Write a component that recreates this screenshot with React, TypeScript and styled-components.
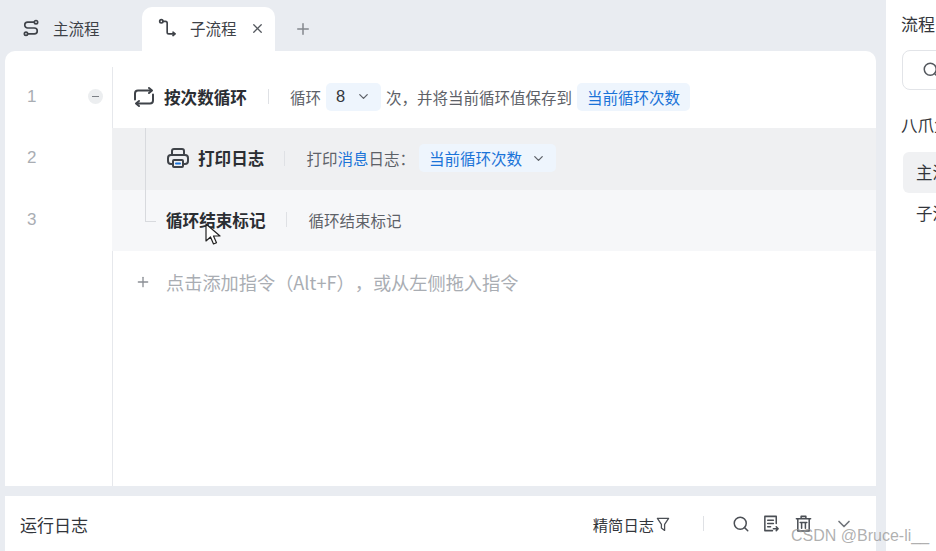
import styled, { createGlobalStyle } from "styled-components";
import { ChevronDown, Plus, Search, X } from "lucide-react";

const GlobalStyle = createGlobalStyle`
  html, body {
    margin: 0;
    padding: 0;
    width: 936px;
    height: 551px;
    overflow: hidden;
  }
  body {
    background: #e9ecf1;
    font-family: "Noto Sans CJK SC", "Noto Sans", sans-serif;
    color: #33363b;
    text-spacing-trim: space-all;
  }
`;

const Page = styled.div`
  position: relative;
  display: flex;
  width: 936px;
  height: 551px;
  overflow: hidden;
`;

const Main = styled.div`
  width: 871px;
  flex: none;
  margin-left: 5px;
  display: flex;
  flex-direction: column;
`;

const TabBar = styled.div`
  height: 51px;
  flex: none;
  display: flex;
  align-items: flex-end;
`;

const Tab = styled.div<{ $active?: boolean }>`
  height: 44px;
  box-sizing: border-box;
  display: flex;
  align-items: center;
  font-size: 15.5px;
  color: #3d4147;
  padding: 0 0 2px 16px;
  width: ${(p) => (p.$active ? 133 : 137)}px;
  background: ${(p) => (p.$active ? "#fff" : "transparent")};
  border-radius: 10px 10px 0 0;
  gap: 12px;
`;

const TabClose = styled(X)`
  width: 15px;
  height: 15px;
  margin-left: 1px;
  color: #54585e;
`;

const AddTab = styled(Plus)`
  width: 18px;
  height: 18px;
  margin: 0 0 13px 19px;
  color: #83878d;
`;

const Editor = styled.div`
  flex: 1;
  min-height: 0;
  background: #fff;
  border-radius: 10px 10px 0 0;
  padding-top: 16px;
  display: flex;
`;

const Gutter = styled.div`
  width: 108px;
  flex: none;
  box-sizing: border-box;
  border-right: 1px solid #e6e8ec;
`;

const LineNo = styled.div<{ $h: number }>`
  height: ${(p) => p.$h}px;
  display: flex;
  align-items: center;
  justify-content: space-between;
  padding: 0 9px 2px 22px;
  box-sizing: border-box;
  font-size: 17px;
  color: #a9adb3;
  font-family: "Liberation Sans", sans-serif;
`;

const Collapse = styled.span`
  width: 15px;
  height: 15px;
  border-radius: 50%;
  background: #eceef0;
  display: flex;
  align-items: center;
  justify-content: center;
  &::before {
    content: "";
    width: 7px;
    height: 1.5px;
    background: #7b7f85;
  }
`;

const Rows = styled.div`
  flex: 1;
  min-width: 0;
  margin-left: -1px;
`;

const Row = styled.div<{ $h: number; $bg?: string; $indent?: number }>`
  position: relative;
  height: ${(p) => p.$h}px;
  box-sizing: border-box;
  background: ${(p) => p.$bg || "transparent"};
  padding: 0 0 2px ${(p) => p.$indent || 0}px;
  display: flex;
  align-items: center;
  font-size: 15.5px;
  color: #5d6168;
`;

const TreeLine = styled.span<{ $end?: boolean }>`
  position: absolute;
  left: 33px;
  top: 0;
  width: ${(p) => (p.$end ? 10 : 0)}px;
  height: ${(p) => (p.$end ? 31 : 62)}px;
  border-left: 1px solid #d8dade;
  border-bottom: ${(p) => (p.$end ? "1px solid #d8dade" : "none")};
`;

const Icon = styled.svg<{ $size?: number }>`
  width: ${(p) => p.$size || 24}px;
  height: ${(p) => p.$size || 24}px;
  flex: none;
  fill: none;
  stroke: #3f4349;
  stroke-width: 2;
  stroke-linecap: round;
  stroke-linejoin: round;
`;

const Title = styled.span<{ $ml?: number }>`
  font-size: 16.6px;
  font-weight: 700;
  color: #2b2e33;
  margin-left: ${(p) => p.$ml ?? 7}px;
`;

const Divider = styled.span<{ $left: number; $right: number }>`
  width: 1px;
  height: 15px;
  background: #dfe1e5;
  margin: 0 ${(p) => p.$right}px 0 ${(p) => p.$left}px;
`;

const Chip = styled.span<{ $ml?: number; $gap?: number }>`
  height: 28px;
  box-sizing: border-box;
  padding: 0 10px;
  margin-left: ${(p) => p.$ml || 0}px;
  gap: ${(p) => p.$gap || 0}px;
  background: #eef5fd;
  border-radius: 5px;
  display: inline-flex;
  align-items: center;
  color: #1a73d8;
  font-size: 15.5px;
  white-space: nowrap;
`;

const NumberChip = styled(Chip)`
  color: #33363b;
  margin: 0 5px;
  width: 55px;
  justify-content: space-between;
  font-size: 16.5px;
  font-family: "Liberation Sans", sans-serif;
`;

const ChipArrow = styled(ChevronDown)`
  width: 15px;
  height: 15px;
  color: #5d6168;
`;

const Link = styled.span`
  color: #1a73d8;
`;

const AddRow = styled.div`
  height: 64px;
  box-sizing: border-box;
  padding: 0 0 2px 23px;
  display: flex;
  align-items: center;
  gap: 15px;
  color: #a9adb3;
  font-size: 18.2px;
`;

const AddIcon = styled(Plus)`
  width: 16px;
  height: 16px;
  color: #8b8f95;
`;

const LogBar = styled.div`
  height: 55px;
  flex: none;
  margin-top: 10px;
  background: #fff;
  display: flex;
  align-items: center;
  padding-left: 15px;
  font-size: 17px;
  color: #33363b;
`;

const LogTitle = styled.span`
  flex: 1;
  padding-top: 1px;
`;

const LogTools = styled.div`
  display: flex;
  align-items: center;
  padding-right: 22px;
  font-size: 15.3px;
`;

const ToolIcon = styled.svg<{ $ml?: number; $size?: number }>`
  width: ${(p) => p.$size || 19}px;
  height: ${(p) => p.$size || 19}px;
  flex: none;
  margin-left: ${(p) => p.$ml || 0}px;
  fill: none;
  stroke: #4b4f55;
  stroke-width: 1.6;
  stroke-linecap: round;
  stroke-linejoin: round;
`;

const LogSearch = styled(Search)`
  width: 18px;
  height: 18px;
  color: #4b4f55;
`;

const LogChevron = styled(ChevronDown)`
  width: 20px;
  height: 20px;
  margin-left: 21px;
  color: #71757b;
`;

const Side = styled.aside`
  width: 50px;
  box-sizing: border-box;
  margin-left: 10px;
  flex: none;
  background: #fff;
  overflow: hidden;
  white-space: nowrap;
  padding-left: 15px;
  font-size: 16.5px;
  color: #33363b;
`;

const SideTitle = styled.div`
  margin-top: 12px;
  line-height: 24px;
  font-size: 17px;
`;

const SideSearch = styled.div`
  margin-top: 14px;
  margin-left: 1px;
  width: 80px;
  height: 40px;
  box-sizing: border-box;
  border: 1px solid #e2e4e8;
  border-radius: 8px;
  display: flex;
  align-items: center;
  padding-left: 19px;
  color: #54585e;
`;

const SideSearchIcon = styled(Search)`
  width: 18px;
  height: 18px;
  flex: none;
`;

const SideGroup = styled.div`
  margin-top: 23px;
  line-height: 24px;
`;

const SideItem = styled.div<{ $active?: boolean }>`
  width: 80px;
  height: 41px;
  margin-left: 2px;
  margin-top: ${(p) => (p.$active ? 15 : 0)}px;
  padding-left: 13px;
  line-height: 40px;
  border-radius: 6px;
  background: ${(p) => (p.$active ? "#f0f1f3" : "transparent")};
`;

const Cursor = styled.svg`
  position: absolute;
  left: 205px;
  top: 223px;
  width: 17px;
  height: 23px;
`;

const Watermark = styled.div`
  position: absolute;
  left: 791px;
  top: 526px;
  font-family: "Liberation Sans", sans-serif;
  font-size: 16px;
  line-height: 20px;
  color: rgba(150, 150, 150, 0.75);
  white-space: nowrap;
`;

function App() {
  return (
    <Page>
      <GlobalStyle />
      <Main>
        <TabBar>
          <Tab>
            <Icon viewBox="0 0 24 24" $size={20}>
              <circle cx="18" cy="5" r="2" />
              <circle cx="6" cy="19" r="2" />
              <path d="M16 5H8a3.5 3.5 0 0 0 0 7h8a3.5 3.5 0 0 1 0 7H8" />
            </Icon>
            主流程
          </Tab>
          <Tab $active>
            <Icon viewBox="0 0 24 24" $size={20}>
              <circle cx="4" cy="4" r="2" />
              <path d="M6 4h3a2 2 0 0 1 2 2v11a2 2 0 0 0 2 2h7" />
              <path d="M18 17l2.500 2-2.500 2" />
            </Icon>
            子流程
            <TabClose />
          </Tab>
          <AddTab />
        </TabBar>
        <Editor>
          <Gutter>
            <LineNo $h={61}>
              1<Collapse />
            </LineNo>
            <LineNo $h={62}>2</LineNo>
            <LineNo $h={61}>3</LineNo>
          </Gutter>
          <Rows>
            <Row $h={61} $indent={20}>
              <Icon viewBox="0 0 24 24">
                <path d="M17 3l3 2.500-3 2.500" />
                <path d="M19 5.500H6a3 3 0 0 0-3 3v6" />
                <path d="M7 21l-3-2.500 3-2.500" />
                <path d="M5 18.500h13a3 3 0 0 0 3-3v-6" />
              </Icon>
              <Title $ml={8}>按次数循环</Title>
              <Divider $left={21} $right={21} />
              循环
              <NumberChip>
                8<ChipArrow />
              </NumberChip>
              次，并将当前循环值保存到
              <Chip $ml={5}>当前循环次数</Chip>
            </Row>
            <Row $h={62} $bg="#eff0f2" $indent={54}>
              <TreeLine />
              <Icon viewBox="0 0 24 24">
                <path d="M6 9V5a2 2 0 0 1 2-2h8a2 2 0 0 1 2 2v4" />
                <path d="M6 18H5a3 3 0 0 1-3-3v-3a3 3 0 0 1 3-3h14a3 3 0 0 1 3 3v3a3 3 0 0 1-3 3h-1" />
                <rect x="7" y="14" width="10" height="7" rx="1" />
                <path d="M10 17.500h4" stroke="#1a73d8" />
              </Icon>
              <Title $ml={8}>打印日志</Title>
              <Divider $left={20} $right={21} />
              打印<Link>消息</Link>日志：
              <Chip $ml={4} $gap={9}>
                当前循环次数
                <ChipArrow />
              </Chip>
            </Row>
            <Row $h={61} $bg="#f6f7f9" $indent={54}>
              <TreeLine $end />
              <Title $ml={0}>循环结束标记</Title>
              <Divider $left={20} $right={22} />
              循环结束标记
            </Row>
            <AddRow>
              <AddIcon />
              点击添加指令（Alt+F），或从左侧拖入指令
            </AddRow>
          </Rows>
        </Editor>
        <LogBar>
          <LogTitle>运行日志</LogTitle>
          <LogTools>
            精简日志
            <ToolIcon viewBox="0 0 20 20" $ml={1} $size={16}>
              <path d="M3 3h14l-5 7.500V18l-4-3v-4.500z" />
            </ToolIcon>
            <Divider $left={32} $right={28} />
            <LogSearch />
            <ToolIcon viewBox="0 0 20 20" $ml={12}>
              <path d="M15 10V2.500H3v15h8" />
              <path d="M6 6.500h6M6 10h6M6 13.500h3" />
              <path d="M12 15.500h5M15 13.500l2 2-2 2" />
            </ToolIcon>
            <ToolIcon viewBox="0 0 20 20" $ml={13}>
              <path d="M2.500 5h15M7.500 5V2.500h5V5" />
              <path d="M4 5v13h12V5" />
              <path d="M6.500 9h7M8 9v6M12 9v6" />
            </ToolIcon>
            <LogChevron />
          </LogTools>
        </LogBar>
      </Main>
      <Side>
        <SideTitle>流程</SideTitle>
        <SideSearch>
          <SideSearchIcon />
        </SideSearch>
        <SideGroup>八爪鱼</SideGroup>
        <SideItem $active>主流程</SideItem>
        <SideItem>子流程</SideItem>
      </Side>
      <Cursor viewBox="0 0 17 23">
        <path
          d="M1 1v17l4.500-4 3 7 3-1.300-3-6.700H15z"
          fill="#fff"
          stroke="#222"
          strokeWidth="1.200"
          strokeLinejoin="round"
        />
      </Cursor>
      <Watermark>CSDN @Bruce-li__</Watermark>
    </Page>
  );
}

export default App;
